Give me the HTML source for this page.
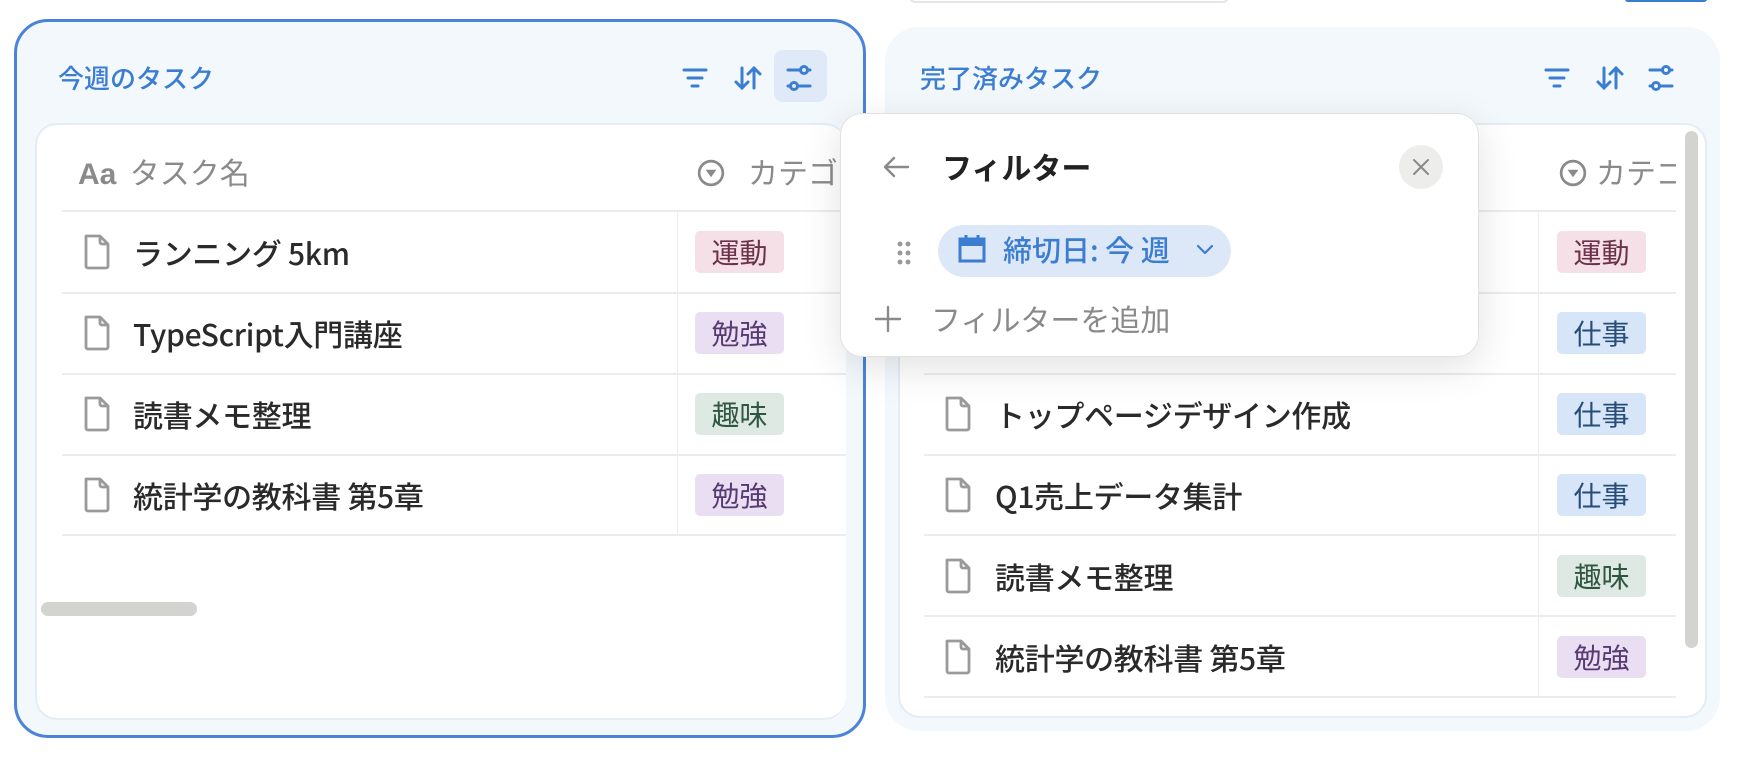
<!DOCTYPE html>
<html><head><meta charset="utf-8"><style>
*{box-sizing:border-box;margin:0;padding:0}
body{width:1738px;height:758px;background:#fff;position:relative;overflow:hidden;font-family:"Liberation Sans","Noto Sans CJK JP",sans-serif;}
.abs{position:absolute}
.panel{position:absolute;background:#f3f8fd;border-radius:34px}
.title{position:absolute;font-size:26px;color:#3b7dd0;font-weight:500;line-height:1;font-family:"Noto Sans CJK JP",sans-serif}
.card{position:absolute;background:#fff;border:2px solid #e4ecf5;border-radius:22px;overflow:hidden}
.hline{position:absolute;height:2px;background:#ececec}
.vline{position:absolute;width:1px;background:#ececec}
.row{position:absolute;font-size:30px;color:#2a2a2a;font-weight:500;white-space:nowrap;line-height:1;font-family:"Noto Sans CJK JP",sans-serif;letter-spacing:-0.3px}
.tag{position:absolute;width:89px;height:42px;border-radius:5px;font-size:28px;line-height:42px;text-align:center;font-family:"Noto Sans CJK JP",sans-serif}
.ex{background:#f6e0e7;color:#6b3149}.st{background:#e9def2;color:#583a72}.ho{background:#dfe9e3;color:#2f5640}.wo{background:#d6e5f7;color:#264d7a}
.hdr{position:absolute;font-size:30px;color:#8a8a8a;line-height:1;white-space:nowrap;font-family:"Noto Sans CJK JP",sans-serif}
</style></head><body>
<div class="abs" style="left:909px;top:-10px;width:320px;height:13px;border-radius:8px;border:2px solid #e5e5e5"></div>
<div class="abs" style="left:1625px;top:-4px;width:82px;height:6px;border-radius:3px;background:#3b7dd0"></div>

<!-- left panel -->
<div class="panel" style="left:14px;top:19px;width:852px;height:719px;border:3px solid #4a84d6"></div>
<div class="title" style="left:58px;top:65px">今週のタスク</div>
<div class="abs" style="left:774px;top:50px;width:53px;height:52px;border-radius:9px;background:#dfe9f8"></div>
<svg class="abs" style="left:680px;top:62px" width="160" height="32" viewBox="0 0 160 32" fill="none" stroke="#3b7dd0" stroke-width="3" stroke-linecap="round">
<path d="M4 8h22M8 16h14M12 24h6"/>
<path d="M62 6v20M56 20l6 6 6-6M74 26V6M68 12l6-6 6 6"/>
<path d="M108 8h22M108 24h22"/><circle cx="124" cy="8" r="3.5" fill="#dfe9f8"/><circle cx="114" cy="24" r="3.5" fill="#dfe9f8"/>
</svg>
<div class="card" style="left:35px;top:123px;width:811px;height:597px;border-right:none"></div>
<div class="hdr" style="left:78px;top:156px"><span style="font-weight:bold;font-family:'Liberation Sans',sans-serif;font-size:30px">Aa</span>&nbsp;&nbsp;タスク名</div>
<svg class="abs" style="left:697px;top:159px" width="28" height="28" viewBox="0 0 26 26"><circle cx="13" cy="13" r="11" fill="none" stroke="#8a8a8a" stroke-width="2.5"/><path d="M8 10h10l-5 7z" fill="#8a8a8a"/></svg>
<div class="hdr" style="left:748px;top:156px;width:89px;overflow:hidden">カテゴリ</div>
<div class="hline" style="left:62px;top:210px;width:784px"></div>
<div class="hline" style="left:62px;top:292px;width:784px"></div>
<div class="hline" style="left:62px;top:373px;width:784px"></div>
<div class="hline" style="left:62px;top:454px;width:784px"></div>
<div class="hline" style="left:62px;top:534px;width:784px"></div>
<div class="vline" style="left:677px;top:212px;height:322px"></div>
<div class="abs" style="left:41px;top:602px;width:156px;height:14px;border-radius:7px;background:#d3d3cf"></div>

<!-- right panel -->
<div class="panel" style="left:885px;top:27px;width:835px;height:704px"></div>
<div class="title" style="left:920px;top:65px">完了済みタスク</div>
<svg class="abs" style="left:1542px;top:62px" width="160" height="32" viewBox="0 0 160 32" fill="none" stroke="#3b7dd0" stroke-width="3" stroke-linecap="round">
<path d="M4 8h22M8 16h14M12 24h6"/>
<path d="M62 6v20M56 20l6 6 6-6M74 26V6M68 12l6-6 6 6"/>
<path d="M108 8h22M108 24h22"/><circle cx="124" cy="8" r="3.5" fill="#f3f8fd"/><circle cx="114" cy="24" r="3.5" fill="#f3f8fd"/>
</svg>
<div class="card" style="left:898px;top:123px;width:809px;height:595px"></div>
<svg class="abs" style="left:1559px;top:159px" width="28" height="28" viewBox="0 0 26 26"><circle cx="13" cy="13" r="11" fill="none" stroke="#8a8a8a" stroke-width="2.5"/><path d="M8 10h10l-5 7z" fill="#8a8a8a"/></svg>
<div class="hdr" style="left:1596px;top:156px;width:80px;overflow:hidden">カテゴリ</div>
<div class="hline" style="left:924px;top:210px;width:752px"></div>
<div class="hline" style="left:924px;top:292px;width:752px"></div>
<div class="hline" style="left:924px;top:373px;width:752px"></div>
<div class="hline" style="left:924px;top:454px;width:752px"></div>
<div class="hline" style="left:924px;top:534px;width:752px"></div>
<div class="hline" style="left:924px;top:615px;width:752px"></div>
<div class="hline" style="left:924px;top:696px;width:752px"></div>
<div class="vline" style="left:1538px;top:212px;height:484px"></div>
<div class="abs" style="left:1685px;top:131px;width:13px;height:517px;border-radius:7px;background:#d3d3cf"></div>

<!-- rows -->
<svg width="0" height="0" style="position:absolute"><defs><g id="doc"><path d="M2 2h14l8 8v22a2 2 0 0 1-2 2H4a2 2 0 0 1-2-2z M16 2v6a2 2 0 0 0 2 2h6" fill="none" stroke="#9a9a9a" stroke-width="2.8" stroke-linejoin="round"/></g></defs></svg>
<svg class="abs" style="left:84px;top:234px" width="28" height="37"><use href="#doc"/></svg>
<div class="row" style="left:133px;top:237px">ランニング 5km</div>
<div class="tag ex" style="left:695px;top:231px">運動</div>
<svg class="abs" style="left:84px;top:315px" width="28" height="37"><use href="#doc"/></svg>
<div class="row" style="left:133px;top:318px">TypeScript入門講座</div>
<div class="tag st" style="left:695px;top:312px">勉強</div>
<svg class="abs" style="left:84px;top:396px" width="28" height="37"><use href="#doc"/></svg>
<div class="row" style="left:133px;top:399px">読書メモ整理</div>
<div class="tag ho" style="left:695px;top:393px">趣味</div>
<svg class="abs" style="left:84px;top:477px" width="28" height="37"><use href="#doc"/></svg>
<div class="row" style="left:133px;top:480px">統計学の教科書 第5章</div>
<div class="tag st" style="left:695px;top:474px">勉強</div>

<div class="tag ex" style="left:1557px;top:231px">運動</div>
<div class="tag wo" style="left:1557px;top:312px">仕事</div>
<svg class="abs" style="left:945px;top:396px" width="28" height="37"><use href="#doc"/></svg>
<div class="row" style="left:995px;top:399px">トップページデザイン作成</div>
<div class="tag wo" style="left:1557px;top:393px">仕事</div>
<svg class="abs" style="left:945px;top:477px" width="28" height="37"><use href="#doc"/></svg>
<div class="row" style="left:995px;top:480px">Q1売上データ集計</div>
<div class="tag wo" style="left:1557px;top:474px">仕事</div>
<svg class="abs" style="left:945px;top:558px" width="28" height="37"><use href="#doc"/></svg>
<div class="row" style="left:995px;top:561px">読書メモ整理</div>
<div class="tag ho" style="left:1557px;top:555px">趣味</div>
<svg class="abs" style="left:945px;top:639px" width="28" height="37"><use href="#doc"/></svg>
<div class="row" style="left:995px;top:642px">統計学の教科書 第5章</div>
<div class="tag st" style="left:1557px;top:636px">勉強</div>

<!-- popup -->
<div class="abs" style="left:840px;top:113px;width:639px;height:244px;background:#fff;border:1px solid #e2e2e2;border-radius:22px;box-shadow:0 10px 40px rgba(0,0,0,0.12)"></div>
<svg class="abs" style="left:882px;top:154px" width="30" height="26" viewBox="0 0 30 26" fill="none" stroke="#8a8a8a" stroke-width="2.4" stroke-linecap="round" stroke-linejoin="round"><path d="M26 13H4M12 4l-9 9 9 9"/></svg>
<div class="abs" style="left:942px;top:151px;font-size:30px;font-weight:bold;color:#222;line-height:1;font-family:'Noto Sans CJK JP',sans-serif">フィルター</div>
<div class="abs" style="left:1399px;top:145px;width:44px;height:44px;border-radius:50%;background:#ededec"></div>
<svg class="abs" style="left:1412px;top:158px" width="18" height="18" viewBox="0 0 18 18" stroke="#8a8a8a" stroke-width="2" stroke-linecap="round"><path d="M2 2l14 14M16 2L2 16"/></svg>
<svg class="abs" style="left:896px;top:240px" width="16" height="26" viewBox="0 0 16 26" fill="#9a9a9a"><circle cx="4" cy="4" r="2.5"/><circle cx="12" cy="4" r="2.5"/><circle cx="4" cy="13" r="2.5"/><circle cx="12" cy="13" r="2.5"/><circle cx="4" cy="22" r="2.5"/><circle cx="12" cy="22" r="2.5"/></svg>
<div class="abs" style="left:938px;top:225px;width:293px;height:52px;border-radius:26px;background:#dce8f8"></div>
<svg class="abs" style="left:957px;top:233px" width="30" height="32" viewBox="0 0 30 32"><rect x="3" y="6" width="24" height="22" fill="none" stroke="#3b7dd0" stroke-width="3"/><rect x="3" y="6" width="24" height="7" fill="#3b7dd0"/><path d="M9 2v6M21 2v6" stroke="#3b7dd0" stroke-width="3"/></svg>
<div class="abs" style="left:1003px;top:235px;font-size:29px;color:#3b7dd0;font-weight:500;line-height:1;white-space:nowrap;font-family:'Noto Sans CJK JP',sans-serif">締切日: 今 週</div>
<svg class="abs" style="left:1196px;top:244px" width="18" height="12" viewBox="0 0 18 12" fill="none" stroke="#3b7dd0" stroke-width="2.2" stroke-linecap="round" stroke-linejoin="round"><path d="M2 2l7 7 7-7"/></svg>
<svg class="abs" style="left:874px;top:305px" width="28" height="28" viewBox="0 0 28 28" stroke="#8a8a8a" stroke-width="2.4" stroke-linecap="round"><path d="M14 2v24M2 14h24"/></svg>
<div class="abs" style="left:931px;top:303px;font-size:30px;color:#8a8a8a;line-height:1;white-space:nowrap;font-family:'Noto Sans CJK JP',sans-serif">フィルターを追加</div>
</body></html>
